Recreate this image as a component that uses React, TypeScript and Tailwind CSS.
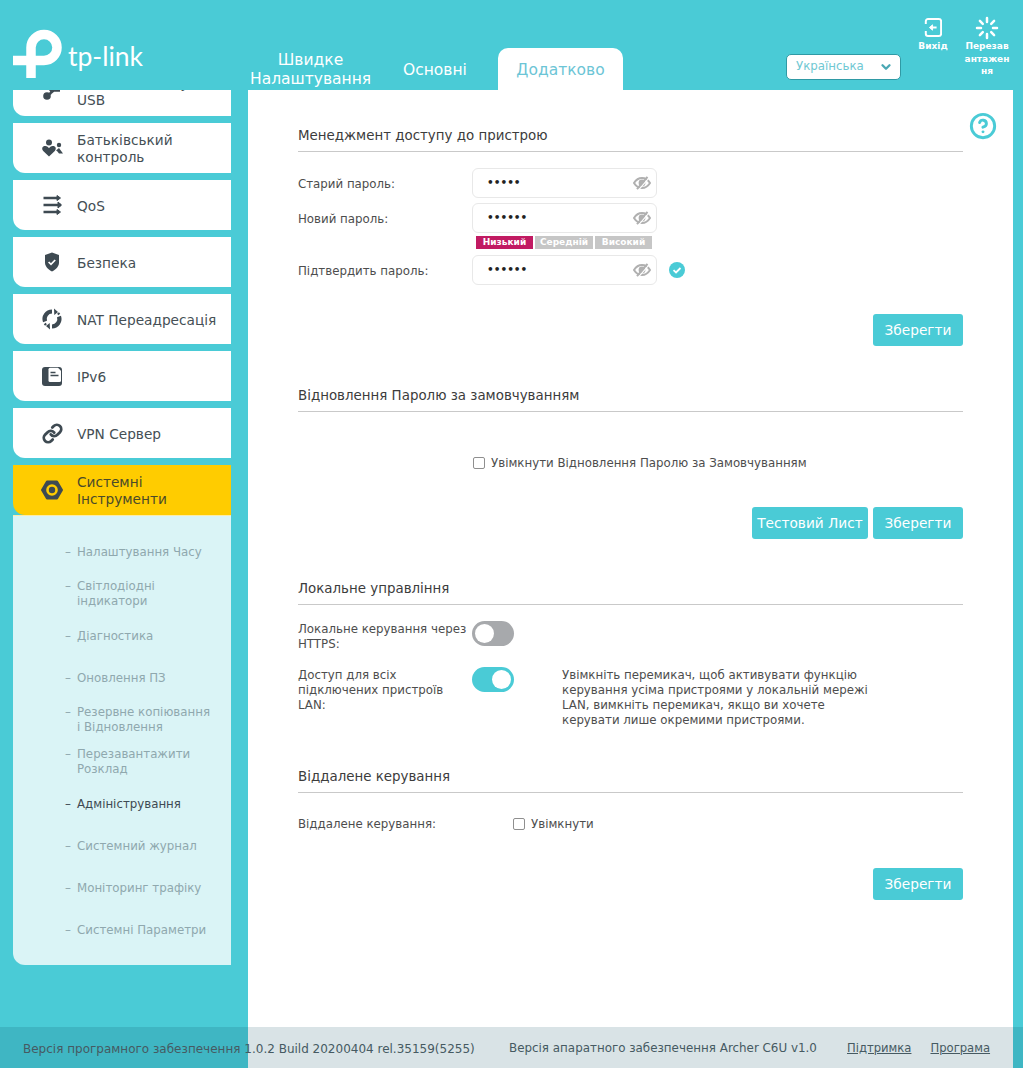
import React from "react";
import { ChevronDown, CircleHelp, Link as LinkIcon, Loader } from "lucide-react";

const DARK = "#3e4a52";

const UsbIcon = () => (
    <svg viewBox="0 0 24 24" className="w-6 h-6" fill="none" stroke={DARK} strokeWidth="2.4">
        <path d="M7 17 18 8M10 15l2.500-3.500H20M12 13 9 9" />
        <circle cx="7" cy="17" r="2.600" fill={DARK} />
    </svg>
);

const ParentIcon = () => (
    <svg viewBox="0 0 24 24" className="w-6 h-6" fill={DARK}>
        <circle cx="9" cy="6.500" r="3" />
        <path d="M9 20.500 3.200 15C1 12.200 2.800 9.600 5.400 10c1.600.2 3 1 3.600 2.200.6-1.200 2-2 3.600-2.200 2.600-.4 4.400 2.200 2.200 5z" />
        <circle cx="19" cy="9" r="2.200" />
        <path d="M19 12l4 5.500h-4l-2-2.500-1-.6z" />
    </svg>
);

const QosIcon = () => (
    <svg viewBox="0 0 24 24" className="w-6 h-6" fill="none" stroke={DARK} strokeWidth="2.300">
        <path d="M3.500 5H19M3.500 12H21M3.500 19H19" />
        <path d="M17 2.500 20.500 5 17 7.500z M18 9l3.500 3-3.500 3z M17 16.500l3.500 2.500-3.500 2.500z" fill={DARK} strokeWidth="1" />
    </svg>
);

const ShieldIcon = () => (
    <svg viewBox="0 0 24 24" className="w-6 h-6">
        <path d="M12 2.500 19 5v7.500c0 4-3 7-7 9-4-2-7-5-7-9V5z" fill={DARK} />
        <path d="M8.600 12l2.400 2.400 4.200-4.400" fill="none" stroke="#fff" strokeWidth="1.700" />
    </svg>
);

const NatIcon = () => (
    <svg viewBox="0 0 24 24" className="w-6 h-6" fill="none">
        <path d="M5 14.500A7.500 7.500 0 0 1 12 4.500" stroke={DARK} strokeWidth="4.200" />
        <path d="M19 9.500A7.500 7.500 0 0 1 12 19.500" stroke={DARK} strokeWidth="4.200" />
        <path d="M14 1.500l4 3.500-3.700 3zM10 22.500l-4-3.500 3.700-3z" fill={DARK} />
        <path d="M18 6l1.300 1.500M6 18l-1.300-1.500" stroke={DARK} strokeWidth="2.400" />
    </svg>
);

const DocIcon = () => (
    <svg viewBox="0 0 24 24" className="w-6 h-6">
        <path d="M5 3h14a3 3 0 0 1 3 3v13a3 3 0 0 1-3 3H5a3 3 0 0 1-3-3V6a3 3 0 0 1 3-3z" fill={DARK} />
        <path d="M10 3.800h8l3 3V16.500a1.500 1.500 0 0 1-1.500 1.500H10a1.500 1.500 0 0 1-1.500-1.500V5.300A1.500 1.500 0 0 1 10 3.800z" fill="#fff" />
        <path d="M10.500 8.500h5M10.500 11.500h8" stroke={DARK} strokeWidth="1.500" />
    </svg>
);

const GearIcon = () => (
    <svg viewBox="0 0 24 24" className="w-6 h-6">
        <path d="M7 3.500h10l5 8.500-5 8.500H7L2 12z" fill={DARK} stroke={DARK} strokeWidth="2" strokeLinejoin="round" />
        <circle cx="12" cy="12" r="5.800" fill="#ffcc00" />
        <circle cx="12" cy="12" r="3.200" fill={DARK} />
    </svg>
);

const EyeSlash = () => (
    <svg viewBox="0 0 18 14" className="w-[18px] h-[14px]" fill="none">
        <path d="M1 7c2-3.200 4.800-5 8-5s6 1.800 8 5c-2 3.200-4.800 5-8 5s-6-1.800-8-5z" stroke="#b0b0b0" strokeWidth="2" />
        <circle cx="9" cy="7" r="3.400" fill="#b0b0b0" />
        <path d="M16 1.800 5.500 14" stroke="#fff" strokeWidth="1.200" />
        <path d="M14.500 .8 4 13.200" stroke="#b0b0b0" strokeWidth="2" />
    </svg>
);

const Logo = () => (
    <svg viewBox="13 29 50 50" className="w-[50px] h-[50px] shrink-0" fill="none">
        <path d="M31 78V47.500a13 13 0 1 1 13 13H13" stroke="#fff" strokeWidth="9.500" />
    </svg>
);

const menu = [
    { label: ["Батьківський", "контроль"], icon: <ParentIcon /> },
    { label: ["QoS"], icon: <QosIcon /> },
    { label: ["Безпека"], icon: <ShieldIcon /> },
    { label: ["NAT Переадресація"], icon: <NatIcon /> },
    { label: ["IPv6"], icon: <DocIcon /> },
    { label: ["VPN Сервер"], icon: <LinkIcon size={21} strokeWidth={3.200} color={DARK} className="mx-[1.500px]" /> },
];

const subMenu = [
    ["Налаштування Часу"],
    ["Світлодіодні", "індикатори"],
    ["Діагностика"],
    ["Оновлення ПЗ"],
    ["Резервне копіювання", "і Відновлення"],
    ["Перезавантажити", "Розклад"],
    ["Адміністрування"],
    ["Системний журнал"],
    ["Моніторинг трафіку"],
    ["Системні Параметри"],
];

const MenuItem = ({ label, icon, active, className }: { label: string[]; icon: React.ReactNode; active?: boolean; className?: string }) => (
    <div className={`h-[50px] shrink-0 flex items-center gap-[13px] pl-[27px] rounded-bl-[12px] text-[13.700px] leading-[17px] ${active ? "bg-[#ffcc00] text-[#4a4a2a]" : "bg-white text-[#454f55]"} ${className ?? ""}`}>
        {icon}
        <div className="pt-[2px]">
            {label.map(line => (
                <div key={line} className="whitespace-nowrap">{line}</div>
            ))}
        </div>
    </div>
);

const SectionTitle = ({ children }: { children: React.ReactNode }) => (
    <h2 className="h-[20px] leading-[22px] text-[13.400px] text-[#3c3c3c] box-content pb-[6px] border-b border-[#c9c9c9]">{children}</h2>
);

const Button = ({ children, className }: { children: React.ReactNode; className?: string }) => (
    <button className={`h-[32px] rounded-[3px] bg-[#4acbd6] text-white text-[13.700px] ${className ?? "w-[90px]"}`}>{children}</button>
);

const PasswordRow = ({ label, dots }: { label: string; dots: string }) => (
    <div className="flex items-center h-[30px]">
        <label className="w-[174px] pt-[3px] text-[11.800px] text-[#4d4d4d]">{label}</label>
        <div className="w-[185px] h-[30px] flex items-center justify-between pl-[14px] pr-[5px] border border-[#e8e8e8] rounded-[6px] bg-white">
            <span className="text-[10.500px] font-bold text-[#222]">{dots}</span>
            <EyeSlash />
        </div>
    </div>
);

const Toggle = ({ on }: { on?: boolean }) => (
    <div className={`w-[42px] h-[25px] rounded-full shrink-0 flex items-center px-[3px] ${on ? "bg-[#4acbd6] justify-end" : "bg-[#a7a9ac] justify-start"}`}>
        <div className="w-[19px] h-[19px] rounded-full bg-white" />
    </div>
);

const Checkbox = () => <input type="checkbox" readOnly className="appearance-none w-3 h-3 border border-[#8f8f8f] rounded-[2px] bg-white shrink-0" />;

export default function App() {
    return (
        <div className="relative h-[1068px] w-[1023px] overflow-hidden flex flex-col bg-[#4acbd6] font-['DejaVu_Sans','Liberation_Sans',sans-serif]">
            {/* Header */}
            <header className="h-[90px] shrink-0 flex">
                <div className="w-[248px] shrink-0 pl-[13px] pt-[29px] flex">
                    <Logo />
                    <span className="ml-[5px] mt-[12px] h-[30px] leading-[30px] text-[26.500px] text-white font-['Lato',sans-serif]">tp-link</span>
                </div>
                <nav className="flex items-end">
                    <div className="ml-[2px] w-[121px] pb-[1px] text-center text-white text-[15.500px] leading-[19px] whitespace-nowrap">Швидке<br />Налаштування</div>
                    <div className="ml-[32px] w-[65px] pb-[10px] text-white text-[15.500px] leading-[19px]">Основні</div>
                    <div className="ml-[30px] w-[125px] h-[42px] rounded-t-[10px] bg-white text-center pt-[13px] text-[#6cc5d6] text-[15.500px] leading-[19px]">Додатково</div>
                </nav>
                <div className="ml-[163px] mt-[54px] w-[115px] h-[26px] flex items-center justify-between pl-[9px] pr-[7px] rounded-[5px] bg-white border border-[#2f9aa5] text-[11.800px] text-[#6fc8d3]">
                    Українська
                    <ChevronDown size={14} strokeWidth={4} color="#4aa8b4" />
                </div>
                <div className="ml-[7px] w-[50px] pt-[17px] flex flex-col items-center text-white text-[9px] font-bold leading-[12px]">
                    <svg viewBox="0 0 20 22" className="w-[18px] h-[21px]" fill="none" stroke="#fff" strokeWidth="2.200">
                        <path d="M2 7V4a2.500 2.500 0 0 1 2.500-2.500h12A2.500 2.500 0 0 1 19 4v14a2.500 2.500 0 0 1-2.500 2.500h-12A2.500 2.500 0 0 1 2 18v-3" />
                        <path d="M14 11H8" />
                        <path d="M9.500 8 6 11l3.500 3z" fill="#fff" strokeWidth="1" />
                    </svg>
                    <span className="mt-[2px]">Вихід</span>
                </div>
                <div className="ml-[4px] w-[50px] pt-[16px] flex flex-col items-center text-white text-[9px] font-bold leading-[12.500px] text-center">
                    <Loader size={24} strokeWidth={2.500} color="#fff" />
                    <span className="break-all w-[46px]">Перезавантаження</span>
                </div>
            </header>

            <div className="flex-1 flex min-h-0">
                {/* Sidebar */}
                <aside className="w-[218px] ml-[13px] shrink-0 flex flex-col gap-[7px] overflow-hidden self-start">
                    <MenuItem className="-mt-[24px]" label={["Спільний доступ", "USB"]} icon={<UsbIcon />} />
                    {menu.map(item => (
                        <MenuItem key={item.label[0]} label={item.label} icon={item.icon} />
                    ))}
                    <div className="flex flex-col">
                        <MenuItem active label={["Системні", "Інструменти"]} icon={<GearIcon />} />
                        <ul className="h-[450px] py-[15px] bg-[#daf4f6] rounded-bl-[12px] border-t border-[#fdeca6] box-border">
                            {subMenu.map(item => (
                                <li key={item[0]} className={`h-[42px] flex items-center pl-[52px] text-[11.800px] leading-[15px] ${item[0] === "Адміністрування" ? "text-[#3e4a52]" : "text-[#8fa8ae]"}`}>
                                    <div className="flex">
                                        <span className="w-[12px]">–</span>
                                        <div>
                                            {item.map(line => (
                                                <div key={line} className="whitespace-nowrap">{line}</div>
                                            ))}
                                        </div>
                                    </div>
                                </li>
                            ))}
                        </ul>
                    </div>
                </aside>

                {/* Main panel */}
                <main className="relative ml-[17px] w-[765px] bg-white pl-[50px] pr-[50px] pt-[35px]">
                    <CircleHelp size={28} strokeWidth={2.500} color="#4acbd6" className="absolute right-[16px] top-[22px]" />

                    <SectionTitle>Менеджмент доступу до пристрою</SectionTitle>
                    <div className="mt-[16px] flex flex-col gap-[5px]">
                        <PasswordRow label="Старий пароль:" dots="•••••" />
                        <PasswordRow label="Новий пароль:" dots="••••••" />
                    </div>
                    <div className="ml-[178px] mt-[3px] flex gap-[2px] text-[9px] font-bold text-white leading-[13px] text-center">
                        <span className="w-[57px] h-[13px] bg-[#c11a62]">Низький</span>
                        <span className="w-[58px] h-[13px] bg-[#c6c6c6]">Середній</span>
                        <span className="w-[57px] h-[13px] bg-[#c6c6c6]">Високий</span>
                    </div>
                    <div className="mt-[6px] flex items-center">
                        <PasswordRow label="Підтвердить пароль:" dots="••••••" />
                        <svg viewBox="0 0 16 16" className="w-4 h-4 ml-[12px]">
                            <circle cx="8" cy="8" r="8" fill="#4acbd6" />
                            <path d="M4.500 8.200 7 10.500l4.500-4.500" fill="none" stroke="#fff" strokeWidth="1.800" />
                        </svg>
                    </div>
                    <div className="mt-[29px] flex justify-end">
                        <Button>Зберегти</Button>
                    </div>

                    <div className="mt-[39px]">
                        <SectionTitle>Відновлення Паролю за замовчуванням</SectionTitle>
                    </div>
                    <div className="mt-[41px] ml-[175px] h-[20px] flex items-center gap-[6px] text-[11.800px] text-[#4d4d4d]">
                        <Checkbox />
                        <span className="pt-[2px]">Увімкнути Відновлення Паролю за Замовчуванням</span>
                    </div>
                    <div className="mt-[34px] flex justify-end gap-[5px]">
                        <Button className="w-[116px]">Тестовий Лист</Button>
                        <Button>Зберегти</Button>
                    </div>

                    <div className="mt-[39px]">
                        <SectionTitle>Локальне управління</SectionTitle>
                    </div>
                    <div className="mt-[16px] flex h-[46px] text-[11.800px] leading-[15px] text-[#4d4d4d]">
                        <div className="w-[174px] pt-[1px]">Локальне керування через HTTPS:</div>
                        <Toggle />
                    </div>
                    <div className="flex h-[60px] text-[11.800px] leading-[15px] text-[#4d4d4d]">
                        <div className="w-[174px] pr-[10px] pt-[1px]">Доступ для всіх підключених пристроїв LAN:</div>
                        <Toggle on />
                        <p className="ml-[48px] w-[312px] pt-[1px]">Увімкніть перемикач, щоб активувати функцію керування усіма пристроями у локальній мережі LAN, вимкніть перемикач, якщо ви хочете керувати лише окремими пристроями.</p>
                    </div>

                    <div className="mt-[39px]">
                        <SectionTitle>Віддалене керування</SectionTitle>
                    </div>
                    <div className="mt-[21px] h-[20px] flex items-center text-[11.800px] text-[#4d4d4d]">
                        <span className="w-[215px] pt-[2px]">Віддалене керування:</span>
                        <Checkbox />
                        <span className="ml-[6px] pt-[2px]">Увімкнути</span>
                    </div>
                    <div className="mt-[34px] flex justify-end">
                        <Button>Зберегти</Button>
                    </div>
                </main>
            </div>

            {/* Footer lies over sidebar and panel */}
            <footer className="absolute left-0 right-0 bottom-0 h-[41px] flex items-center pl-[23px] pt-[2px] bg-[rgba(0,68,88,0.15)] text-[11.900px] text-[#465a62]">
                <span className="w-[486px] whitespace-nowrap text-[12px]">Версія програмного забезпечення 1.0.2 Build 20200404 rel.35159(5255)</span>
                <span className="w-[338px] whitespace-nowrap">Версія апаратного забезпечення Archer C6U v1.0</span>
                <a className="underline text-[11.600px]">Підтримка</a>
                <a className="underline ml-[19px] text-[11.600px]">Програма</a>
            </footer>
        </div>
    );
}
